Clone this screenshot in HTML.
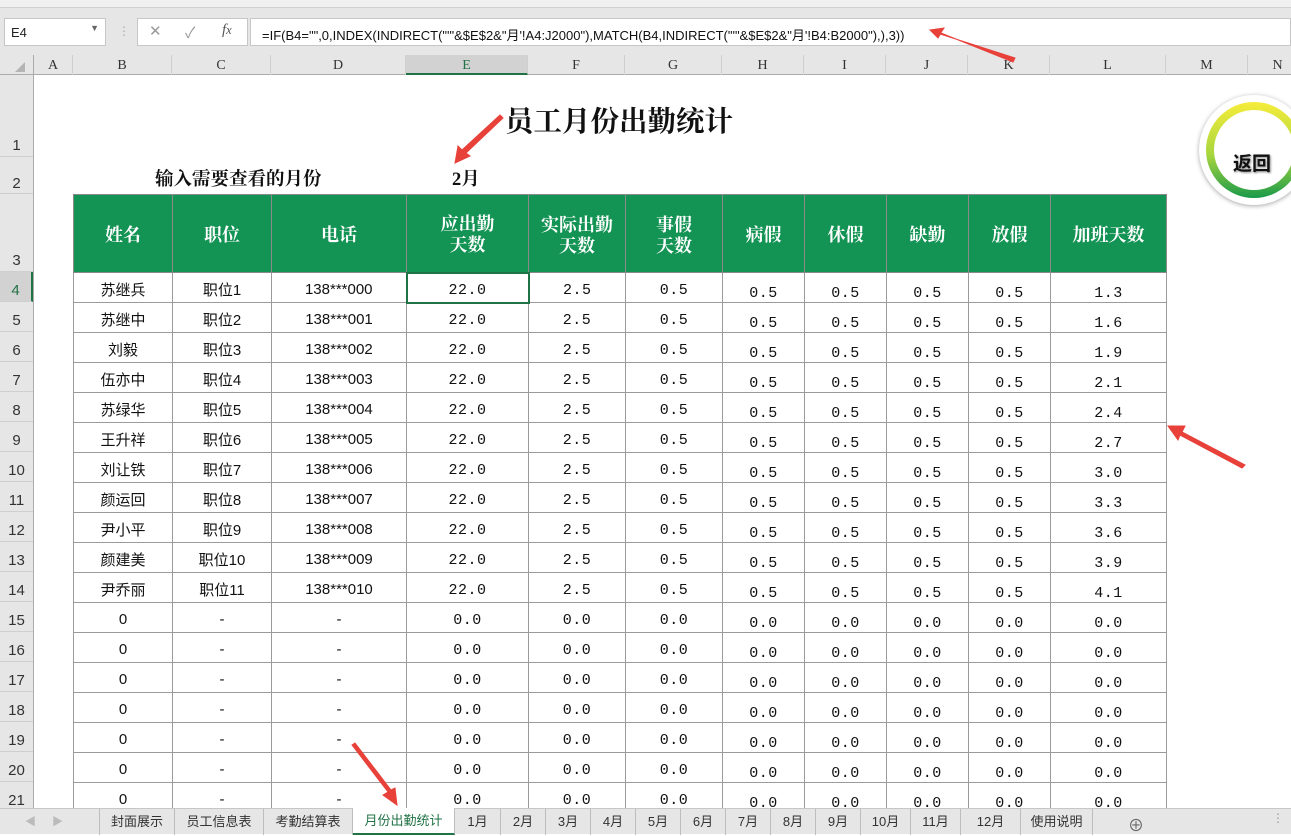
<!DOCTYPE html>
<html><head><meta charset="utf-8">
<style>
*{box-sizing:border-box;margin:0;padding:0}
body{width:1291px;height:834px;overflow:hidden;background:#fff;font-family:"Liberation Sans","Noto Sans CJK SC",sans-serif;position:relative}
.abs{position:absolute}
#top{left:0;top:0;width:1291px;height:55px;background:#e6e6e6}
#namebox{left:4px;top:18px;width:102px;height:28px;background:#fff;border:1px solid #c6c6c6;font-size:13px;padding:6px 0 0 6px;color:#222}
#fx{left:137px;top:18px;width:111px;height:28px;background:#fff;border:1px solid #c6c6c6;color:#999;font-size:15px}
#formula{left:250px;top:18px;width:1041px;height:28px;background:#fff;border:1px solid #c6c6c6;font-size:13px;padding:6px 0 0 11px;color:#111;white-space:nowrap}
#colhdr{left:0;top:55px;width:1291px;height:20px;background:#e6e6e6;border-bottom:1px solid #ababab}
.ch{position:absolute;top:0;height:20px;border-right:1px solid #cfcfcf;text-align:center;font-family:"Liberation Serif",serif;font-size:14px;line-height:22px;color:#333}
#rowhdr{left:0;top:75px;width:34px;height:733px;background:#e6e6e6;border-right:1px solid #ababab}
.rh{position:absolute;left:0;width:33px;border-bottom:1px solid #cfcfcf;text-align:center;font-size:15px;color:#333}
table{position:absolute;left:73px;top:194px;border-collapse:collapse;table-layout:fixed}
td{border:1px solid #9b9b9b;height:30px;text-align:center;font-size:15px;color:#111;padding:3px 0 0;overflow:hidden;white-space:nowrap}
th{background:#139354;color:#fff;border:1px solid #8a8a8a;height:78px;font-family:"Liberation Serif","Noto Serif CJK SC",serif;font-size:18px;font-weight:bold;line-height:21px;padding-top:4px}
td.n{font-family:"Liberation Mono","Noto Serif CJK SC",monospace;letter-spacing:0.5px;padding-top:5px}
td.d{font-family:"Liberation Mono",monospace;letter-spacing:0.5px;padding-top:12px}
#tabs{left:0;top:808px;width:1291px;height:26px;background:#e6e6e6;border-top:1px solid #c6c6c6}
.tab{position:absolute;top:0;height:26px;border-right:1px solid #bdbdbd;font-size:13px;color:#333;text-align:center;line-height:26px}
</style></head><body>
<div id="top" class="abs">
<div class="abs" style="left:0;top:0;width:1291px;height:8px;border-bottom:1px solid #d0d0d0;background:#f0f0f0"></div>
</div>
<div id="namebox" class="abs">E4<span style="position:absolute;right:6px;top:4px;font-size:9px;color:#666">▼</span></div>
<div class="abs" style="left:118px;top:24px;color:#aaa;font-size:12px">⋮</div>
<div id="fx" class="abs"><span class="abs" style="left:11px;top:3px">✕</span><span class="abs" style="left:47px;top:3px">✓</span><span class="abs" style="left:84px;top:3px;color:#555;font-style:italic;font-family:'Liberation Serif',serif">f<small>x</small></span></div>
<div id="formula" class="abs">=IF(B4="",0,INDEX(INDIRECT("'"&amp;$E$2&amp;"月'!A4:J2000"),MATCH(B4,INDIRECT("'"&amp;$E$2&amp;"月'!B4:B2000"),),3))</div>
<div id="colhdr" class="abs">
<div class="ch" style="left:0;width:34px;border-right:1px solid #ababab"><span style="position:absolute;left:15px;top:7px;width:0;height:0;border-left:10px solid transparent;border-bottom:10px solid #b4b4b4"></span></div>
<div class="ch" style="left:34px;width:39px">A</div>
<div class="ch" style="left:73px;width:99px">B</div>
<div class="ch" style="left:172px;width:99px">C</div>
<div class="ch" style="left:271px;width:135px">D</div>
<div class="ch" style="left:406px;width:122px;background:#d2d2d2;border-bottom:2px solid #217346;color:#217346">E</div>
<div class="ch" style="left:528px;width:97px">F</div>
<div class="ch" style="left:625px;width:97px">G</div>
<div class="ch" style="left:722px;width:82px">H</div>
<div class="ch" style="left:804px;width:82px">I</div>
<div class="ch" style="left:886px;width:82px">J</div>
<div class="ch" style="left:968px;width:82px">K</div>
<div class="ch" style="left:1050px;width:116px">L</div>
<div class="ch" style="left:1166px;width:82px">M</div>
<div class="ch" style="left:1248px;width:60px">N</div>
</div>
<div id="rowhdr" class="abs">
<div class="rh" style="top:0;height:82px;padding-top:62px">1</div>
<div class="rh" style="top:82px;height:37px;padding-top:18px">2</div>
<div class="rh" style="top:119px;height:78px;padding-top:58px">3</div>
<div class="rh" style="top:197px;height:30px;padding-top:10px;background:#d2d2d2;color:#217346;border-right:2px solid #217346">4</div>
<div class="rh" style="top:227px;height:30px;padding-top:10px">5</div>
<div class="rh" style="top:257px;height:30px;padding-top:10px">6</div>
<div class="rh" style="top:287px;height:30px;padding-top:10px">7</div>
<div class="rh" style="top:317px;height:30px;padding-top:10px">8</div>
<div class="rh" style="top:347px;height:30px;padding-top:10px">9</div>
<div class="rh" style="top:377px;height:30px;padding-top:10px">10</div>
<div class="rh" style="top:407px;height:30px;padding-top:10px">11</div>
<div class="rh" style="top:437px;height:30px;padding-top:10px">12</div>
<div class="rh" style="top:467px;height:30px;padding-top:10px">13</div>
<div class="rh" style="top:497px;height:30px;padding-top:10px">14</div>
<div class="rh" style="top:527px;height:30px;padding-top:10px">15</div>
<div class="rh" style="top:557px;height:30px;padding-top:10px">16</div>
<div class="rh" style="top:587px;height:30px;padding-top:10px">17</div>
<div class="rh" style="top:617px;height:30px;padding-top:10px">18</div>
<div class="rh" style="top:647px;height:30px;padding-top:10px">19</div>
<div class="rh" style="top:677px;height:30px;padding-top:10px">20</div>
<div class="rh" style="top:707px;height:30px;padding-top:10px">21</div>
</div>

<div class="abs" style="left:505px;top:99px;font-family:'Liberation Serif','Noto Serif CJK SC',serif;font-size:28.5px;font-weight:bold;color:#111">员工月份出勤统计</div>
<div class="abs" style="left:155px;top:165px;font-family:'Liberation Serif','Noto Serif CJK SC',serif;font-size:18.5px;font-weight:bold;color:#111">输入需要查看的月份</div>
<div class="abs" style="left:452px;top:165px;font-family:'Liberation Serif','Noto Serif CJK SC',serif;font-size:18.5px;font-weight:bold;color:#111">2月</div>

<div class="abs" style="left:1199px;top:95px;width:110px;height:110px;border-radius:50%;background:#fff;box-shadow:0 1px 5px rgba(0,0,0,.35)"></div>
<div class="abs" style="left:1206px;top:102px;width:96px;height:96px;border-radius:50%;background:linear-gradient(#f6ec3a,#a8d63e 55%,#1a9a4a)"></div>
<div class="abs" style="left:1214px;top:110px;width:80px;height:80px;border-radius:50%;background:#fff"></div>
<div class="abs" style="left:1233px;top:149px;font-size:19px;font-weight:bold;color:#111;text-shadow:1px 1px 2px #888">返回</div>

<table>
<colgroup><col style="width:99px"><col style="width:99px"><col style="width:135px"><col style="width:122px"><col style="width:97px"><col style="width:97px"><col style="width:82px"><col style="width:82px"><col style="width:82px"><col style="width:82px"><col style="width:116px"></colgroup>
<tr><th>姓名</th><th>职位</th><th>电话</th><th>应出勤<br>天数</th><th>实际出勤<br>天数</th><th>事假<br>天数</th><th>病假</th><th>休假</th><th>缺勤</th><th>放假</th><th>加班天数</th></tr>
<tr><td>苏继兵</td><td>职位1</td><td>138***000</td><td class="n" style="border:2px solid #217346">22.0</td><td class="n">2.5</td><td class="n">0.5</td><td class="d">0.5</td><td class="d">0.5</td><td class="d">0.5</td><td class="d">0.5</td><td class="d">1.3</td></tr>
<tr><td>苏继中</td><td>职位2</td><td>138***001</td><td class="n">22.0</td><td class="n">2.5</td><td class="n">0.5</td><td class="d">0.5</td><td class="d">0.5</td><td class="d">0.5</td><td class="d">0.5</td><td class="d">1.6</td></tr>
<tr><td>刘毅</td><td>职位3</td><td>138***002</td><td class="n">22.0</td><td class="n">2.5</td><td class="n">0.5</td><td class="d">0.5</td><td class="d">0.5</td><td class="d">0.5</td><td class="d">0.5</td><td class="d">1.9</td></tr>
<tr><td>伍亦中</td><td>职位4</td><td>138***003</td><td class="n">22.0</td><td class="n">2.5</td><td class="n">0.5</td><td class="d">0.5</td><td class="d">0.5</td><td class="d">0.5</td><td class="d">0.5</td><td class="d">2.1</td></tr>
<tr><td>苏绿华</td><td>职位5</td><td>138***004</td><td class="n">22.0</td><td class="n">2.5</td><td class="n">0.5</td><td class="d">0.5</td><td class="d">0.5</td><td class="d">0.5</td><td class="d">0.5</td><td class="d">2.4</td></tr>
<tr><td>王升祥</td><td>职位6</td><td>138***005</td><td class="n">22.0</td><td class="n">2.5</td><td class="n">0.5</td><td class="d">0.5</td><td class="d">0.5</td><td class="d">0.5</td><td class="d">0.5</td><td class="d">2.7</td></tr>
<tr><td>刘让铁</td><td>职位7</td><td>138***006</td><td class="n">22.0</td><td class="n">2.5</td><td class="n">0.5</td><td class="d">0.5</td><td class="d">0.5</td><td class="d">0.5</td><td class="d">0.5</td><td class="d">3.0</td></tr>
<tr><td>颜运回</td><td>职位8</td><td>138***007</td><td class="n">22.0</td><td class="n">2.5</td><td class="n">0.5</td><td class="d">0.5</td><td class="d">0.5</td><td class="d">0.5</td><td class="d">0.5</td><td class="d">3.3</td></tr>
<tr><td>尹小平</td><td>职位9</td><td>138***008</td><td class="n">22.0</td><td class="n">2.5</td><td class="n">0.5</td><td class="d">0.5</td><td class="d">0.5</td><td class="d">0.5</td><td class="d">0.5</td><td class="d">3.6</td></tr>
<tr><td>颜建美</td><td>职位10</td><td>138***009</td><td class="n">22.0</td><td class="n">2.5</td><td class="n">0.5</td><td class="d">0.5</td><td class="d">0.5</td><td class="d">0.5</td><td class="d">0.5</td><td class="d">3.9</td></tr>
<tr><td>尹乔丽</td><td>职位11</td><td>138***010</td><td class="n">22.0</td><td class="n">2.5</td><td class="n">0.5</td><td class="d">0.5</td><td class="d">0.5</td><td class="d">0.5</td><td class="d">0.5</td><td class="d">4.1</td></tr>
<tr><td>0</td><td>-</td><td>-</td><td class="n">0.0</td><td class="n">0.0</td><td class="n">0.0</td><td class="d">0.0</td><td class="d">0.0</td><td class="d">0.0</td><td class="d">0.0</td><td class="d">0.0</td></tr>
<tr><td>0</td><td>-</td><td>-</td><td class="n">0.0</td><td class="n">0.0</td><td class="n">0.0</td><td class="d">0.0</td><td class="d">0.0</td><td class="d">0.0</td><td class="d">0.0</td><td class="d">0.0</td></tr>
<tr><td>0</td><td>-</td><td>-</td><td class="n">0.0</td><td class="n">0.0</td><td class="n">0.0</td><td class="d">0.0</td><td class="d">0.0</td><td class="d">0.0</td><td class="d">0.0</td><td class="d">0.0</td></tr>
<tr><td>0</td><td>-</td><td>-</td><td class="n">0.0</td><td class="n">0.0</td><td class="n">0.0</td><td class="d">0.0</td><td class="d">0.0</td><td class="d">0.0</td><td class="d">0.0</td><td class="d">0.0</td></tr>
<tr><td>0</td><td>-</td><td>-</td><td class="n">0.0</td><td class="n">0.0</td><td class="n">0.0</td><td class="d">0.0</td><td class="d">0.0</td><td class="d">0.0</td><td class="d">0.0</td><td class="d">0.0</td></tr>
<tr><td>0</td><td>-</td><td>-</td><td class="n">0.0</td><td class="n">0.0</td><td class="n">0.0</td><td class="d">0.0</td><td class="d">0.0</td><td class="d">0.0</td><td class="d">0.0</td><td class="d">0.0</td></tr>
<tr><td>0</td><td>-</td><td>-</td><td class="n">0.0</td><td class="n">0.0</td><td class="n">0.0</td><td class="d">0.0</td><td class="d">0.0</td><td class="d">0.0</td><td class="d">0.0</td><td class="d">0.0</td></tr>
</table>

<svg class="abs" style="left:0;top:0" width="1291" height="834">
<g fill="#e8413a" stroke="#e8413a">
<polygon points="1015,58 940,34 944,28 930,30 938,38 941,33 1013,62" />
<polygon points="500,115 462,150 458,146 455,163 470,156 466,153 503,118"/>
<polygon points="1245,465 1182,432 1185,426 1168,426 1178,440 1180,435 1242,468"/>
<polygon points="352,745 388,792 383,795 397,805 395,788 391,790 355,743"/>
</g>
</svg>

<div id="tabs" class="abs">
<span class="abs" style="left:25px;top:4px;color:#bbb;font-size:11px">◀</span>
<span class="abs" style="left:52px;top:4px;color:#bbb;font-size:11px">▶</span>
<div class="tab" style="left:80px;width:20px;border-right:1px solid #bdbdbd"></div>
<div class="tab" style="left:100px;width:75px">封面展示</div>
<div class="tab" style="left:175px;width:89px">员工信息表</div>
<div class="tab" style="left:264px;width:89px">考勤结算表</div>
<div class="tab" style="left:353px;top:-1px;width:102px;height:27px;background:#fff;color:#217346;border-bottom:2px solid #217346">月份出勤统计</div>
<div class="tab" style="left:455px;width:46px">1月</div>
<div class="tab" style="left:501px;width:45px">2月</div>
<div class="tab" style="left:546px;width:45px">3月</div>
<div class="tab" style="left:591px;width:45px">4月</div>
<div class="tab" style="left:636px;width:45px">5月</div>
<div class="tab" style="left:681px;width:45px">6月</div>
<div class="tab" style="left:726px;width:45px">7月</div>
<div class="tab" style="left:771px;width:45px">8月</div>
<div class="tab" style="left:816px;width:45px">9月</div>
<div class="tab" style="left:861px;width:50px">10月</div>
<div class="tab" style="left:911px;width:50px">11月</div>
<div class="tab" style="left:961px;width:60px">12月</div>
<div class="tab" style="left:1021px;width:72px">使用说明</div>
<span class="abs" style="left:1128px;top:3px;color:#666;font-size:16px">⊕</span>
<span class="abs" style="left:1272px;top:2px;color:#999;font-size:12px">⋮</span>
</div>
</body></html>
